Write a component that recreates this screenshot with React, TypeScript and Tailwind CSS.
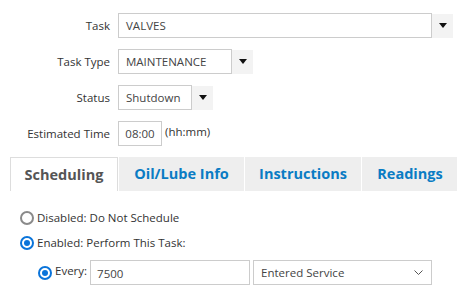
import * as React from 'react';

const Caret: React.FC = () => (
  <svg width="8" height="5" viewBox="0 0 8 5" className="block">
    <path d="M0 0 H8 L4 5 Z" fill="#111" />
  </svg>
);

interface FieldRowProps {
  label: string;
  children: React.ReactNode;
}

const FieldRow: React.FC<FieldRowProps> = ({ label, children }) => (
  <div className="flex items-center h-[25px]">
    <div className="w-[110px] text-right text-[11.5px] text-[#333]">{label}</div>
    <div className="ml-[8px] flex items-center">{children}</div>
  </div>
);

const SelectBox: React.FC<{ value: string; width: string }> = ({ value, width }) => (
  <div className="flex items-center">
    <div className={`${width} h-[25px] border border-[#cccccc] bg-white flex items-center px-[7px] text-[11.5px] text-[#444]`}>
      {value}
    </div>
    <div className="w-[21px] h-[24px] bg-[#f3f3f3] flex items-center justify-center">
      <Caret />
    </div>
  </div>
);

const Radio: React.FC<{ checked?: boolean }> = ({ checked }) =>
  checked ? (
    <span className="w-[14px] h-[14px] rounded-full border-2 border-[#0a74da] flex items-center justify-center bg-white">
      <span className="w-[6px] h-[6px] rounded-full bg-[#0a74da]" />
    </span>
  ) : (
    <span className="w-[14px] h-[14px] rounded-full border-2 border-[#8a8a8a] bg-white" />
  );

const tabs = [
  { name: 'Scheduling', width: 'w-[108px]' },
  { name: 'Oil/Lube Info', width: 'w-[125px]' },
  { name: 'Instructions', width: 'w-[116px]' },
  { name: 'Readings', width: 'w-[96px]' },
];

export default function App() {
  return (
    <div className="w-[457px] h-[292px] bg-white overflow-hidden font-['Open_Sans',sans-serif]">
      <div className="pt-[13px] flex flex-col gap-[11px]">
        <FieldRow label="Task">
          <SelectBox value="VALVES" width="w-[314px]" />
        </FieldRow>
        <FieldRow label="Task Type">
          <SelectBox value="MAINTENANCE" width="w-[114px]" />
        </FieldRow>
        <FieldRow label="Status">
          <SelectBox value="Shutdown" width="w-[74px]" />
        </FieldRow>
        <FieldRow label="Estimated Time">
          <div className="w-[44px] h-[25px] border border-[#cccccc] flex items-center justify-center text-[11.5px] text-[#444]">
            08:00
          </div>
          <span className="ml-[3px] text-[11.5px] text-[#333] -mt-[3px]">(hh:mm)</span>
        </FieldRow>
      </div>

      <div className="mt-[11px] pl-[10px] flex gap-[1px] h-[34px]">
        {tabs.map((t, i) =>
          i === 0 ? (
            <div
              key={t.name}
              className={`${t.width} shrink-0 border border-b-0 border-[#dddddd] bg-white flex items-center justify-center text-[14.5px] font-bold text-[#555]`}
            >
              {t.name}
            </div>
          ) : (
            <div
              key={t.name}
              className={`${t.width} shrink-0 bg-[#eeeeee] flex items-center justify-center text-[14.5px] font-bold text-[#0a7cc4]`}
            >
              {t.name}
            </div>
          )
        )}
      </div>

      <div className="pl-[20px] pt-[20px] flex flex-col text-[11.5px] text-[#333]">
        <label className="flex items-center gap-[3px] h-[14px]">
          <Radio />
          <span>Disabled: Do Not Schedule</span>
        </label>
        <label className="flex items-center gap-[3px] h-[14px] mt-[11px]">
          <Radio checked />
          <span>Enabled: Perform This Task:</span>
        </label>
        <div className="flex items-center mt-[10px] pl-[18px]">
          <Radio checked />
          <span className="ml-[3px] -mt-[3px]">Every:</span>
          <div className="ml-[3px] w-[160px] h-[25px] border border-[#cccccc] flex items-center px-[6px] pt-[2px] text-[#444]">
            7500
          </div>
          <div className="ml-[3px] w-[179px] h-[25px] border border-[#cccccc] flex items-center justify-between pl-[7px] pr-[8px] text-[#444]">
            <span>Entered Service</span>
            <svg width="9" height="6" viewBox="0 0 9 6">
              <path d="M0.5 0.5 L4.5 4.5 L8.5 0.5" fill="none" stroke="#555" strokeWidth="1" />
            </svg>
          </div>
        </div>
      </div>
    </div>
  );
}
